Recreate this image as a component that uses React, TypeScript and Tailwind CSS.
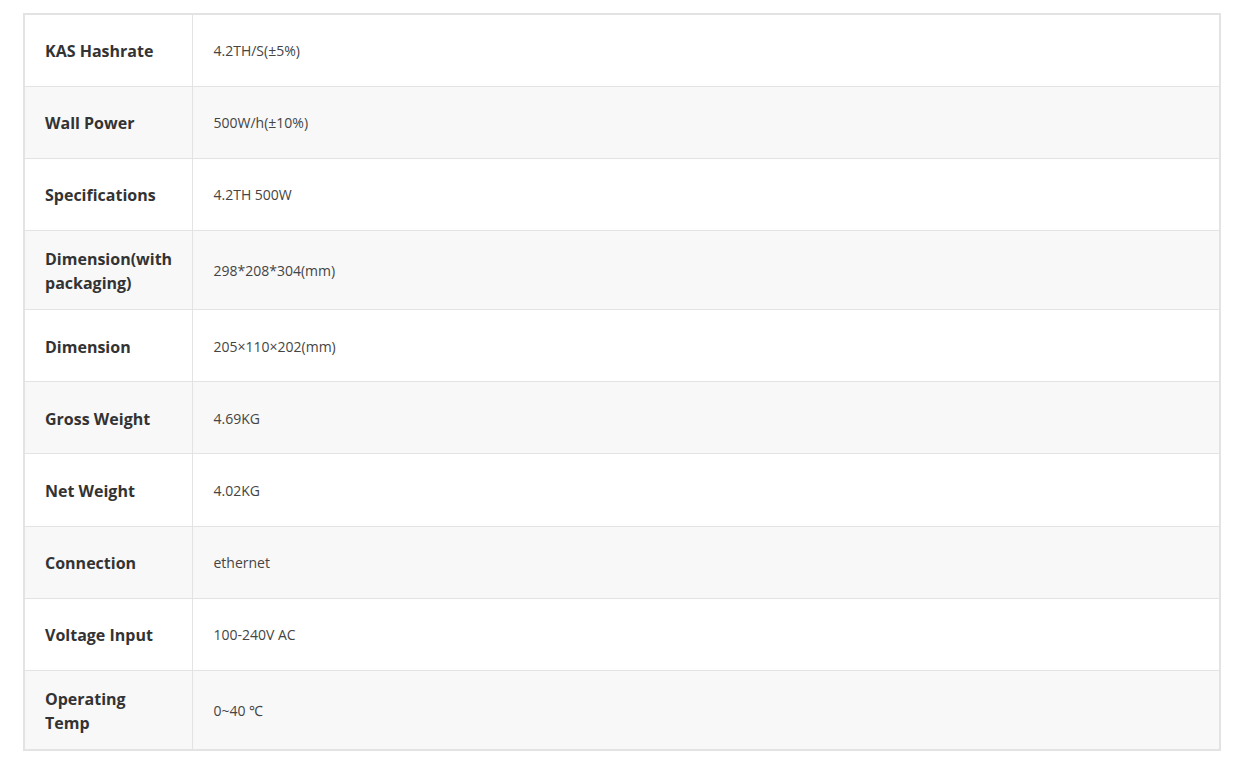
import React from "react";

const rows = [
  { label: "KAS Hashrate", value: "4.2TH/S(±5%)" },
  { label: "Wall Power", value: "500W/h(±10%)" },
  { label: "Specifications", value: "4.2TH 500W" },
  { label: "Dimension(with packaging)", value: "298*208*304(mm)" },
  { label: "Dimension", value: "205×110×202(mm)" },
  { label: "Gross Weight", value: "4.69KG" },
  { label: "Net Weight", value: "4.02KG" },
  { label: "Connection", value: "ethernet" },
  { label: "Voltage Input", value: "100-240V AC" },
  { label: "Operating Temp", value: "0~40 ℃" },
];

export default function App() {
  return (
    <div className="min-h-screen bg-white pt-[13px] pl-[23px] font-['Open_Sans',sans-serif]">
      <table className="w-[1198px] border-collapse border-2 border-[#e3e3e3] table-fixed">
        <tbody>
          {rows.map((r, i) => (
            <tr key={r.label} className={i % 2 === 1 ? "bg-[#f8f8f8]" : "bg-white"}>
              <td className="w-[168px] h-[72.2px] border border-[#e3e3e3] px-[20px] pt-[16px] pb-[14px] text-[16px] leading-[24px] font-bold text-[#333] align-middle">
                {r.label}
              </td>
              <td className="h-[72.2px] border border-[#e3e3e3] pl-[21px] pr-[20px] pt-[16px] pb-[14px] text-[14px] leading-[22px] text-[#444] align-middle">
                {r.value}
              </td>
            </tr>
          ))}
        </tbody>
      </table>
    </div>
  );
}
